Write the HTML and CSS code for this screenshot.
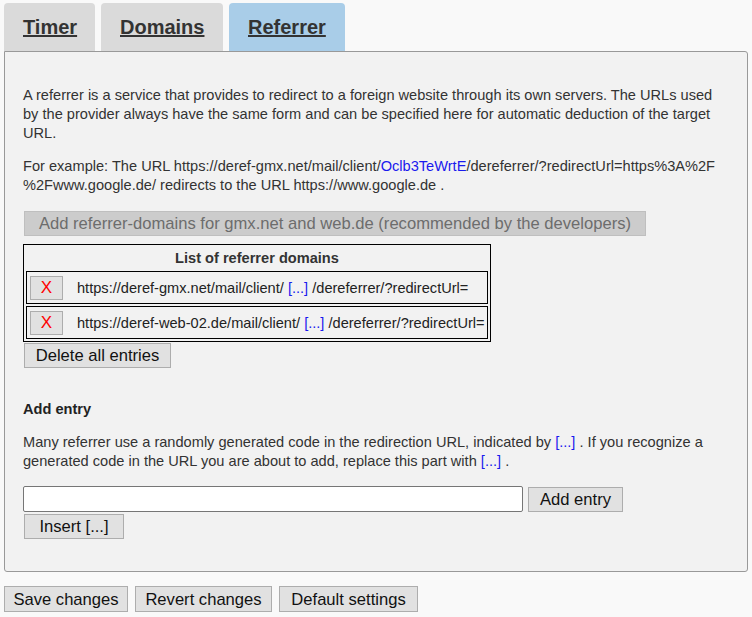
FILE: index.html
```html
<!DOCTYPE html>
<html>
<head>
<meta charset="utf-8">
<link rel="stylesheet" href="styles.css">
</head>
<body>
<div class="tabs">
  <div class="tab"><a>Timer</a></div>
  <div class="tab"><a>Domains</a></div>
  <div class="tab active"><a>Referrer</a></div>
</div>
<div class="panel">
  <p class="intro">A referrer is a service that provides to redirect to a foreign website through its own servers. The URLs used by the provider always have the same form and can be specified here for automatic deduction of the target URL.</p>
  <p class="example">For example: The URL https://deref-gmx.net/mail/client/<span class="link">Oclb3TeWrtE</span>/dereferrer/?redirectUrl=https%3A%2F<wbr>%2Fwww.google.de/ redirects to the URL https://www.google.de .</p>
  <button class="btn btn-disabled btn-add-defaults" disabled>Add referrer-domains for gmx.net and web.de (recommended by the developers)</button>
  <div class="ref-table">
    <div class="ref-head">List of referrer domains</div>
    <div class="ref-row">
      <button class="btn-x">X</button>
      <span class="ref-url">https://deref-gmx.net/mail/client/ <span class="link">[...]</span> /dereferrer/?redirectUrl=</span>
    </div>
    <div class="ref-row">
      <button class="btn-x">X</button>
      <span class="ref-url">https://deref-web-02.de/mail/client/ <span class="link">[...]</span> /dereferrer/?redirectUrl=</span>
    </div>
  </div>
  <button class="btn btn-inpanel btn-delete">Delete all entries</button>
  <h3 class="add-title">Add entry</h3>
  <p class="add-desc">Many referrer use a randomly generated code in the redirection URL, indicated by <span class="link">[...]</span> . If you recognize a generated code in the URL you are about to add, replace this part with <span class="link">[...]</span> .</p>
  <div class="add-row">
    <input class="add-input" type="text">
    <button class="btn btn-add-entry">Add entry</button>
  </div>
  <button class="btn btn-inpanel btn-insert">Insert [...]</button>
</div>
<div class="footer">
  <button class="btn btn-foot">Save changes</button>
  <button class="btn btn-foot">Revert changes</button>
  <button class="btn btn-foot">Default settings</button>
</div>
</body>
</html>
```

FILE: styles.css
```css
html, body {
  margin: 0;
  padding: 0;
  background: #f9f9f9;
}
body {
  padding: 3px 4px 0 4px;
  font-family: "Liberation Sans", Arial, sans-serif;
  font-size: 14.6px;
  color: #333;
}
.tabs {
  display: flex;
  gap: 6px;
  height: 48px;
}
.tab {
  background: #dadada;
  border-radius: 4px 4px 0 0;
  padding: 0 19px;
  height: 48px;
  line-height: 48px;
  font-size: 20px;
  font-weight: bold;
  white-space: nowrap;
}
.tab:first-child { width: 53px; }
.tab:nth-child(2) { width: 84px; }
.tab:nth-child(3) { width: 78px; }
.tab a {
  color: #333;
  text-decoration: underline;
}
.tab.active {
  background: #a9cde8;
}
.panel {
  background: #f2f2f2;
  border: 1px solid #999;
  border-radius: 0 3px 3px 3px;
  padding: 34px 18px 35px 18px;
  height: 450px;
}
.panel p {
  margin: 0;
  line-height: 19px;
}
.example {
  margin-top: 14px !important;
}
.link {
  color: #1a1aee;
}
.btn {
  font-family: "Liberation Sans", Arial, sans-serif;
  font-size: 16.6px;
  color: #111;
  background: #e1e1e1;
  border: 1px solid #adadad;
  border-radius: 0;
  height: 25px;
  padding: 0 6px;
  margin: 0;
  line-height: 23px;
  white-space: nowrap;
}
.btn-inpanel {
  display: block;
  margin-left: 1px;
}
.btn-disabled {
  display: block;
  margin: 16px 0 0 1px;
  background: #cccccc;
  border-color: #bfbfbf;
  color: #6d6d6d;
  width: 622px;
}
.ref-table {
  margin-top: 8px;
  width: 468px;
  box-sizing: border-box;
  border: 1px solid #000;
  padding: 2px;
  display: flex;
  flex-direction: column;
  gap: 2px;
}
.ref-head {
  height: 22px;
  line-height: 22px;
  text-align: center;
  font-weight: bold;
}
.ref-row {
  border: 1px solid #000;
  height: 31px;
  box-sizing: content-box;
  padding: 0 3px;
  display: flex;
  align-items: center;
  white-space: nowrap;
  overflow: hidden;
}
.btn-x {
  flex: none;
  width: 33px;
  height: 24px;
  background: #e1e1e1;
  border: 1px solid #adadad;
  color: #ff0000;
  font-family: "Liberation Sans", Arial, sans-serif;
  font-size: 17px;
  padding: 0;
  margin: 0 14px 0 0;
  line-height: 22px;
}
.ref-url {
  color: #222;
}
.btn-delete {
  margin-top: 1px;
  width: 147px;
}
.add-title {
  margin: 32px 0 0 0;
  font-size: 14.6px;
  font-weight: bold;
  line-height: 19px;
  color: #222;
}
.add-desc {
  margin-top: 14px !important;
}
.add-row {
  margin-top: 15px;
  display: flex;
  align-items: center;
  gap: 5px;
}
.add-input {
  width: 500px;
  height: 26px;
  box-sizing: border-box;
  border: 1px solid #767676;
  border-radius: 2px;
  background: #fff;
  margin: 0;
  padding: 0 4px;
}
.btn-add-entry {
  width: 95px;
  height: 25px;
}
.btn-insert {
  margin-top: 2px;
  width: 100px;
}
.footer {
  margin-top: 14px;
  display: flex;
  gap: 7px;
}
.btn-foot {
  height: 26px;
}
.footer .btn-foot:nth-child(1) { width: 124px; }
.footer .btn-foot:nth-child(2) { width: 137px; }
.footer .btn-foot:nth-child(3) { width: 139px; }
```
